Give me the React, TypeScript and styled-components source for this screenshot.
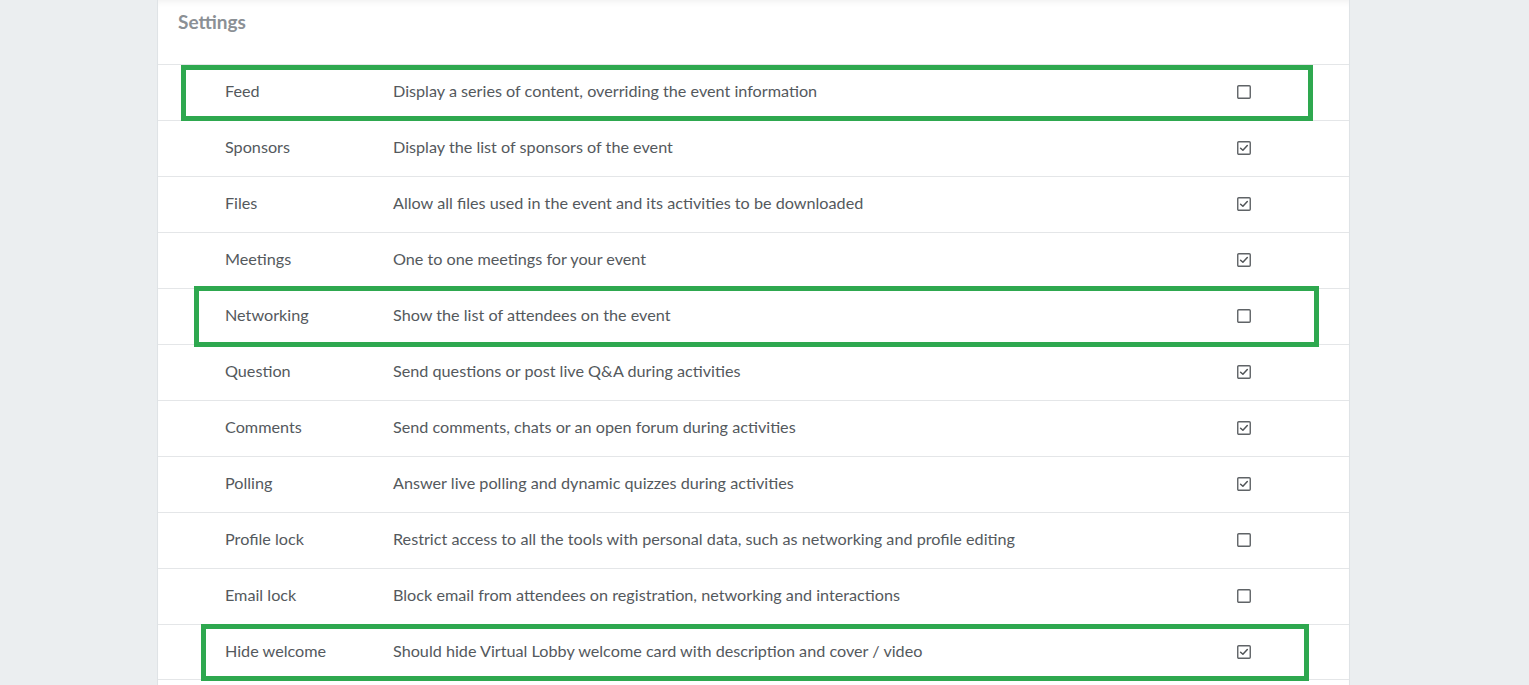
import styled, { createGlobalStyle } from "styled-components";

const settings = [
  { name: "Feed", text: "Display a series of content, overriding the event information", on: false },
  { name: "Sponsors", text: "Display the list of sponsors of the event", on: true },
  { name: "Files", text: "Allow all files used in the event and its activities to be downloaded", on: true },
  { name: "Meetings", text: "One to one meetings for your event", on: true },
  { name: "Networking", text: "Show the list of attendees on the event", on: false },
  { name: "Question", text: "Send questions or post live Q&A during activities", on: true },
  { name: "Comments", text: "Send comments, chats or an open forum during activities", on: true },
  { name: "Polling", text: "Answer live polling and dynamic quizzes during activities", on: true },
  { name: "Profile lock", text: "Restrict access to all the tools with personal data, such as networking and profile editing", on: false },
  { name: "Email lock", text: "Block email from attendees on registration, networking and interactions", on: false },
  { name: "Hide welcome", text: "Should hide Virtual Lobby welcome card with description and cover / video", on: true },
];

// highlight boxes drawn over some rows (left, top, width, height relative to the row)
const highlights: Record<string, { left: number; top: number; width: number; height: number }> = {
  Feed: { left: 23, top: 0, width: 1132, height: 56 },
  Networking: { left: 36, top: -3, width: 1125, height: 61 },
  "Hide welcome": { left: 43, top: -1, width: 1108, height: 57 },
};

const GlobalStyles = createGlobalStyle`
  html, body {
    margin: 0;
    background: #ebeef0;
    overflow: hidden;
  }
  body {
    font-family: Lato, "Open Sans", sans-serif;
  }
`;

const Page = styled.div`
  height: 685px;
  padding-left: 157px;
  box-sizing: border-box;
`;

const Card = styled.div`
  width: 1193px;
  height: 100%;
  background: #fff;
  border-left: 1px solid #dfe3e6;
  border-right: 1px solid #dfe3e6;
  box-sizing: border-box;
  box-shadow: inset 0 6px 6px -4px rgba(0, 0, 0, 0.06);
  overflow: hidden;
`;

const Header = styled.div`
  height: 64px;
  padding: 10px 0 0 20px;
  box-sizing: border-box;
  font-size: 19px;
  font-weight: 700;
  color: #8b9095;
`;

const Row = styled.div`
  position: relative;
  display: grid;
  grid-template-columns: 168px 844px 60px;
  align-items: center;
  height: 56px;
  padding: 0 0 4px 67px;
  box-sizing: border-box;
  border-top: 1px solid #e4e6e8;
  font-size: 16.2px;
  color: #54595d;

  &:last-child {
    border-bottom: 1px solid #e4e6e8;
  }
`;

const Name = styled.div``;

const Description = styled.div``;

const Check = styled.div`
  display: flex;
  padding-top: 3px;
`;

const Highlight = styled.div`
  position: absolute;
  z-index: 1;
  border: 5px solid #2ea84f;
  box-sizing: border-box;
  pointer-events: none;
`;

const Checkbox = ({ on }: { on: boolean }) => (
  <svg width="14" height="14" viewBox="0 0 14 14">
    <rect x="0.75" y="0.75" width="12.5" height="12.5" rx="1" fill="#fff" stroke="#5f6366" strokeWidth="1.4" />
    {on && (
      <path
        d="M3.6 7.2 L5.9 9.3 L10.3 4.6"
        fill="none"
        stroke="#505457"
        strokeWidth="1.5"
        strokeLinecap="round"
        strokeLinejoin="round"
      />
    )}
  </svg>
);

const App = () => {
  return (
    <>
      <GlobalStyles />
      <Page>
        <Card>
          <Header>Settings</Header>
          {settings.map((s) => {
            const box = highlights[s.name];
            return (
              <Row key={s.name}>
                <Name>{s.name}</Name>
                <Description>{s.text}</Description>
                <Check>
                  <Checkbox on={s.on} />
                </Check>
                {box && (
                  <Highlight
                    style={{ left: box.left, top: box.top, width: box.width, height: box.height }}
                  />
                )}
              </Row>
            );
          })}
        </Card>
      </Page>
    </>
  );
};

export default App;
